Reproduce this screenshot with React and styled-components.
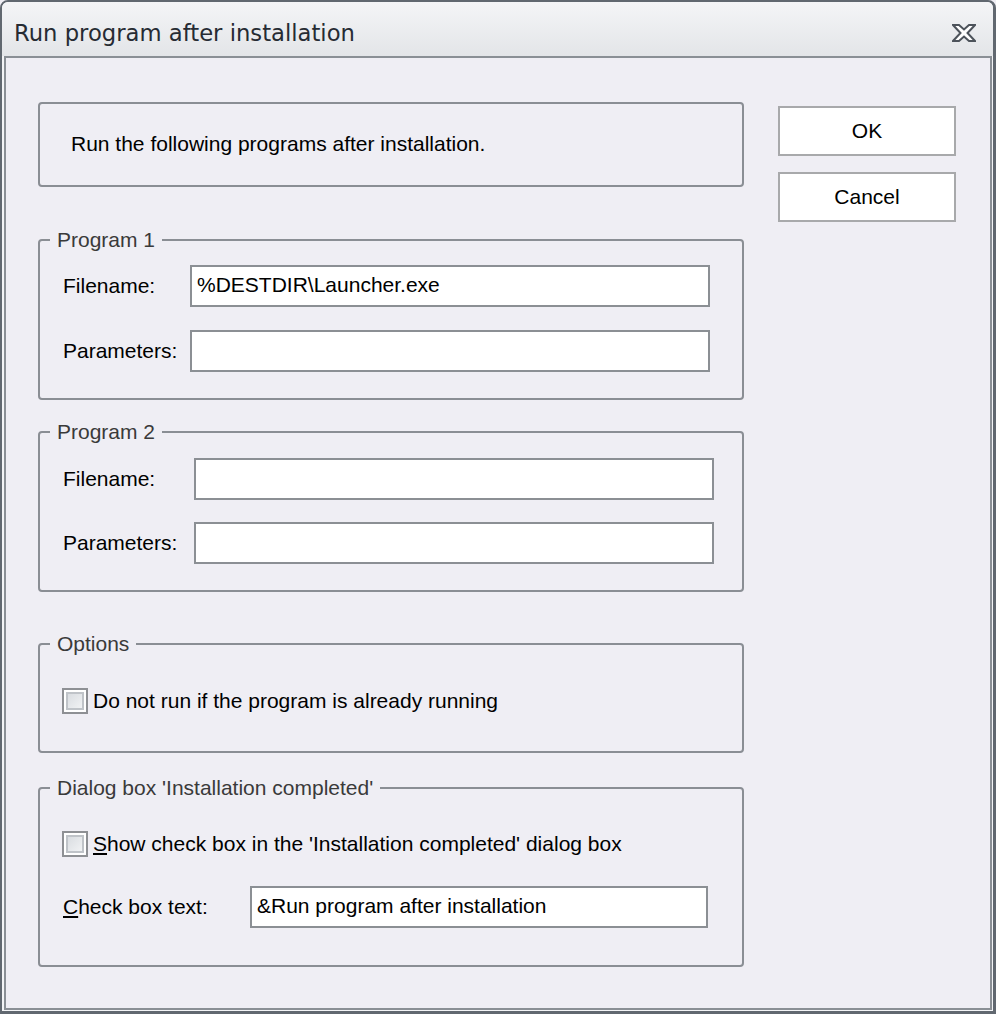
import React from 'react';
import styled, { createGlobalStyle } from 'styled-components';

const GlobalStyle = createGlobalStyle`
    html, body {
        margin: 0;
        padding: 0;
        background: #efeef4;
    }
    * {
        box-sizing: border-box;
    }
`;

const Window = styled.div`
    width: 996px;
    height: 1014px;
    display: flex;
    flex-direction: column;
    border: 2px solid #616870;
    border-right-width: 3px;
    border-bottom-width: 3px;
    border-radius: 8px 8px 0 0;
    background: #f3f4f6;
    font-family: 'Liberation Sans', Arial, sans-serif;
    font-size: 21px;
    color: #000;
`;

const TitleBar = styled.div`
    height: 54px;
    flex: none;
    display: flex;
    align-items: center;
    justify-content: space-between;
    padding: 8px 17px 0 12px;
    border-radius: 6px 6px 0 0;
    background: linear-gradient(#f4f5f7, #e3e5e8);
`;

const Title = styled.span`
    font-family: 'DejaVu Sans', Verdana, sans-serif;
    font-size: 22.7px;
    color: #262b33;
`;

const CloseIcon = () => (
    <svg width="24" height="18" viewBox="0 0 24 18">
        <polygon
            points="1,1 7,1 12,5.5 17,1 23,1 15.5,9 23,17 17,17 12,12.5 7,17 1,17 8.5,9"
            fill="#fff"
            stroke="#4d535b"
            strokeWidth="2"
            strokeLinejoin="miter"
        />
    </svg>
);

const Frame = styled.div`
    flex: 1;
    display: flex;
    align-items: flex-start;
    margin: 0 1px 1px 2px;
    padding: 44px 0 0 32px;
    border: 2px solid #8a8f95;
    background: #efeef4;
`;

const MainColumn = styled.div`
    width: 706px;
    display: flex;
    flex-direction: column;
`;

const ButtonColumn = styled.div`
    display: flex;
    flex-direction: column;
    gap: 16px;
    margin: 4px 0 0 34px;
`;

const Button = styled.button`
    width: 178px;
    height: 50px;
    border: 2px solid #a8a9ab;
    background: #fff;
    font: inherit;
    color: #000;
    padding: 0;
`;

const InfoBox = styled.div`
    height: 85px;
    display: flex;
    align-items: center;
    padding: 0 0 2px 31px;
    border: 2px solid #8a8e94;
    border-radius: 4px;
`;

const Group = styled.fieldset`
    margin: ${p => p.$top}px 0 0 0;
    padding: 0 0 0 10px;
    border: 2px solid #8a8e94;
    border-radius: 4px;
    min-width: 0;
`;

const Legend = styled.legend`
    padding: 0 7px;
    line-height: 24px;
    color: #3a3a3a;
`;

const GroupBody = styled.div`
    display: flex;
    flex-direction: column;
    gap: ${p => p.$gap}px;
    padding: ${p => p.$padTop}px 0 ${p => p.$padBottom}px 13px;
`;

const Row = styled.div`
    height: 42px;
    display: grid;
    grid-template-columns: ${p => p.$labelWidth}px ${p => p.$inputWidth}px;
    align-items: center;
`;

const Label = styled.label`
    white-space: nowrap;
`;

const Input = styled.input`
    height: 42px;
    width: 100%;
    border: 2px solid #8b8f94;
    background: #fff;
    padding: 0 5px 2px;
    font: inherit;
    color: #000;
    outline: none;
`;

const CheckRow = styled.label`
    height: 42px;
    display: flex;
    align-items: center;
    gap: 5px;
    margin-left: -1px;
`;

const CheckBox = styled.span`
    width: 26px;
    height: 26px;
    flex: none;
    border: 2px solid #8e9094;
    box-shadow: inset 0 0 0 2px #fff, inset 0 0 0 4px #bfc3c8;
    background: linear-gradient(135deg, #d3d7dc, #f7f8f9);
`;

const Field = ({ label, value = '', labelWidth, inputWidth }) => (
    <Row $labelWidth={labelWidth} $inputWidth={inputWidth}>
        <Label>{label}</Label>
        <Input readOnly defaultValue={value} />
    </Row>
);

const App = () => (
    <>
        <GlobalStyle />
        <Window>
            <TitleBar>
                <Title>Run program after installation</Title>
                <CloseIcon />
            </TitleBar>
            <Frame>
                <MainColumn>
                    <InfoBox>Run the following programs after installation.</InfoBox>

                    <Group $top={41}>
                        <Legend>Program 1</Legend>
                        <GroupBody $padTop={13} $padBottom={26} $gap={23}>
                            <Field label="Filename:" value="%DESTDIR\Launcher.exe" labelWidth={127} inputWidth={520} />
                            <Field label="Parameters:" labelWidth={127} inputWidth={520} />
                        </GroupBody>
                    </Group>

                    <Group $top={20}>
                        <Legend>Program 2</Legend>
                        <GroupBody $padTop={14} $padBottom={26} $gap={22}>
                            <Field label="Filename:" labelWidth={131} inputWidth={520} />
                            <Field label="Parameters:" labelWidth={131} inputWidth={520} />
                        </GroupBody>
                    </Group>

                    <Group $top={40}>
                        <Legend>Options</Legend>
                        <GroupBody $padTop={24} $padBottom={29} $gap={0}>
                            <CheckRow>
                                <CheckBox />
                                Do not run if the program is already running
                            </CheckRow>
                        </GroupBody>
                    </Group>

                    <Group $top={23}>
                        <Legend>Dialog box 'Installation completed'</Legend>
                        <GroupBody $padTop={23} $padBottom={37} $gap={21}>
                            <CheckRow>
                                <CheckBox />
                                <span><u>S</u>how check box in the 'Installation completed' dialog box</span>
                            </CheckRow>
                            <Field
                                label={<><u>C</u>heck box text:</>}
                                value="&Run program after installation"
                                labelWidth={187}
                                inputWidth={458}
                            />
                        </GroupBody>
                    </Group>
                </MainColumn>
                <ButtonColumn>
                    <Button>OK</Button>
                    <Button>Cancel</Button>
                </ButtonColumn>
            </Frame>
        </Window>
    </>
);

export default App;
